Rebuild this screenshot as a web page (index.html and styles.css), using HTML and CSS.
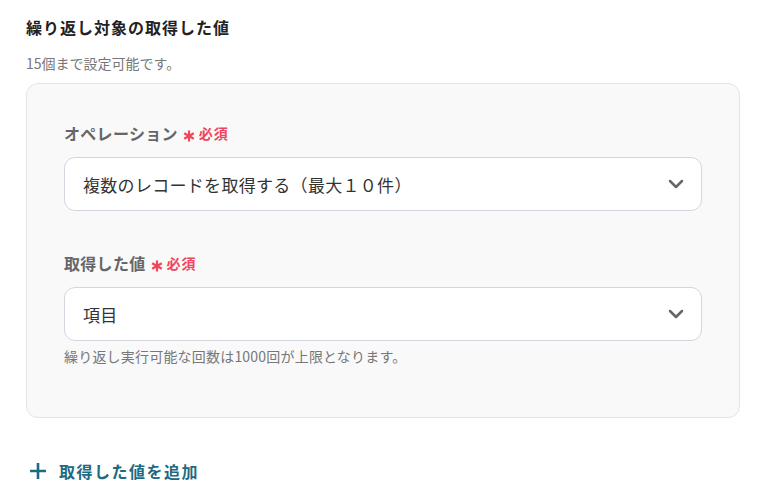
FILE: index.html
```html
<!DOCTYPE html>
<html lang="ja">
<head>
<meta charset="utf-8">
<link rel="stylesheet" href="styles.css">
</head>
<body>
<div class="page">
  <h2 class="title">繰り返し対象の取得した値</h2>
  <p class="note">15個まで設定可能です。</p>
  <div class="panel">
    <div class="field">
      <div class="label">オペレーション<span class="req"><svg class="ast" width="12" height="12" viewBox="0 0 12 12"><path d="M6 0.5v11M1.2 3.2l9.6 5.6M1.2 8.8l9.6-5.6" stroke="#f0455a" stroke-width="2.2"/></svg>必須</span></div>
      <div class="select"><span class="value">複数のレコードを取得する（最大１０件）</span>
        <svg class="chev" width="16" height="10" viewBox="0 0 16 10"><path d="M2 2l6 6 6-6" fill="none" stroke="#666" stroke-width="2.5" stroke-linecap="round" stroke-linejoin="round"/></svg>
      </div>
    </div>
    <div class="field second">
      <div class="label">取得した値<span class="req"><svg class="ast" width="12" height="12" viewBox="0 0 12 12"><path d="M6 0.5v11M1.2 3.2l9.6 5.6M1.2 8.8l9.6-5.6" stroke="#f0455a" stroke-width="2.2"/></svg>必須</span></div>
      <div class="select"><span class="value">項目</span>
        <svg class="chev" width="16" height="10" viewBox="0 0 16 10"><path d="M2 2l6 6 6-6" fill="none" stroke="#666" stroke-width="2.5" stroke-linecap="round" stroke-linejoin="round"/></svg>
      </div>
      <p class="help">繰り返し実行可能な回数は1000回が上限となります。</p>
    </div>
  </div>
  <div class="add">
    <svg width="18" height="18" viewBox="0 0 18 18"><path d="M9 1v16M1 9h16" stroke="#1d6a83" stroke-width="2.6"/></svg>
    <span>取得した値を追加</span>
  </div>
</div>
</body>
</html>
```
FILE: styles.css
```css
* { box-sizing: border-box; }
body {
  margin: 0;
  background: #fff;
  font-family: "Noto Sans CJK JP", "Noto Sans", sans-serif;
}
.page {
  padding: 13px 19px 0 26px;
}
.title {
  margin: 0;
  font-size: 16px;
  letter-spacing: 1px;
  font-weight: 700;
  color: #222;
  line-height: 28px;
}
.note {
  margin: 12px 0 0;
  font-size: 14px;
  color: #777;
  line-height: 20px;
}
.panel {
  margin-top: 10px;
  background: #f9f9f9;
  border: 1px solid #e4e4e4;
  border-radius: 12px;
  padding: 37px 37px 51px 37px;
}
.field.second { margin-top: 40px; }
.label {
  font-size: 16px;
  font-weight: 700;
  color: #666;
  line-height: 24px;
  letter-spacing: 0.3px;
  display: flex;
  align-items: center;
}
.req {
  color: #f0455a;
  font-size: 14px;
  font-weight: 700;
  letter-spacing: 1px;
  margin-left: 5px;
  display: flex;
  align-items: center;
}
.ast {
  margin-right: 4px;
  position: relative;
  top: 3px;
}
.select {
  margin-top: 12px;
  height: 54px;
  background: #fff;
  border: 1px solid #d3d6de;
  border-radius: 11px;
  display: flex;
  align-items: center;
  justify-content: space-between;
  padding: 0 17px 0 18px;
}
.value {
  font-size: 17px;
  color: #333;
  letter-spacing: 0.3px;
}
.help {
  margin: 5px 0 0;
  font-size: 14px;
  letter-spacing: 0.2px;
  color: #777;
  line-height: 20px;
}
.add {
  margin-top: 41px;
  display: flex;
  align-items: center;
  gap: 12px;
  padding-left: 3px;
  color: #1d6a83;
  font-size: 16px;
  font-weight: 700;
  letter-spacing: 1.5px;
}
```
